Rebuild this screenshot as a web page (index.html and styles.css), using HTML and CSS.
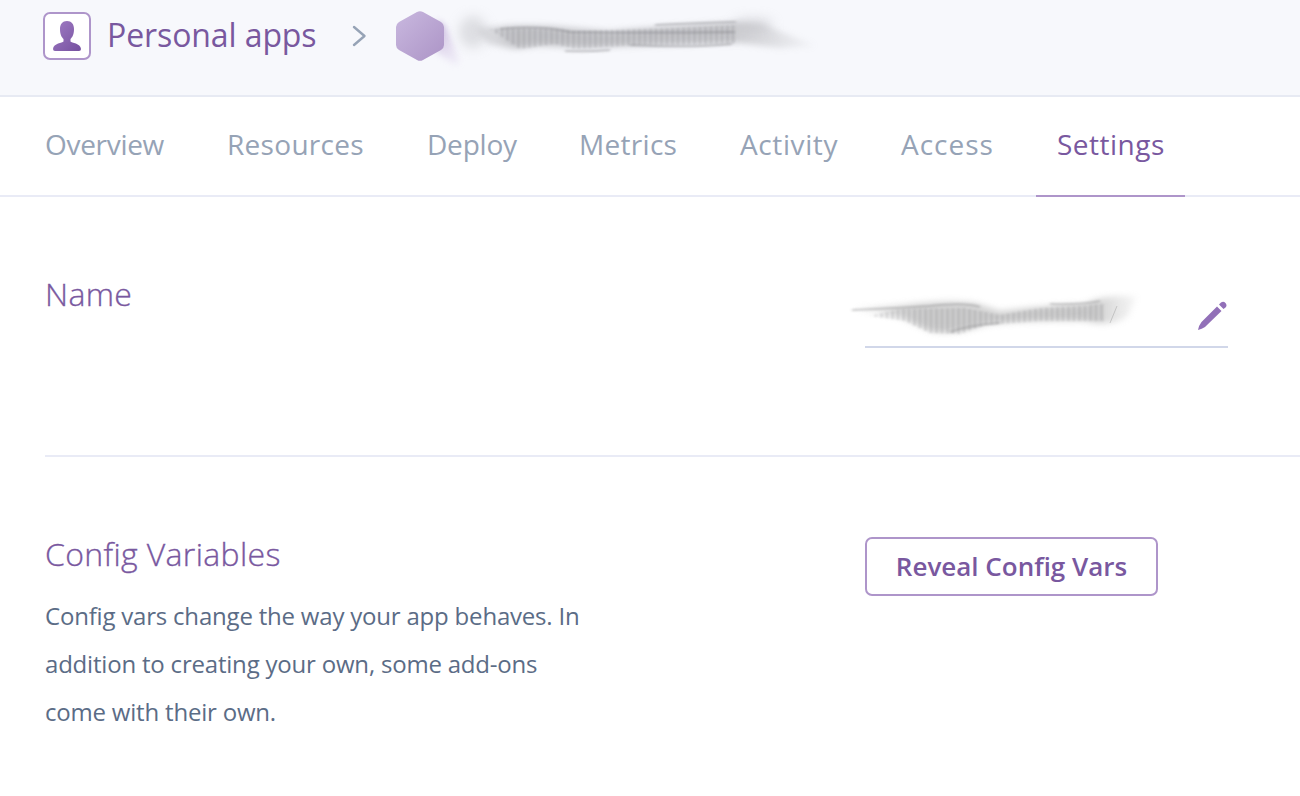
FILE: index.html
```html
<!DOCTYPE html>
<html lang="en">
<head>
<meta charset="utf-8">
<title>Settings</title>
<link rel="stylesheet" href="styles.css">
</head>
<body>
<header class="topbar">
  <span class="avatar"><svg width="28" height="30" viewBox="0 0 28 30"><defs><linearGradient id="ga" x1="0" y1="0" x2="1" y2="1"><stop offset="0" stop-color="#a07cc4"/><stop offset="1" stop-color="#75509f"/></linearGradient></defs><path fill="url(#ga)" d="M14 0C18.500 0 21 3 21 8C21 13.500 19.500 16 17.500 18V20.500C18.500 22 27.500 22 28 28Q28 30 26 30H2Q0 30 0 28C.5 22 9.500 22 10.500 20.500V18C8.500 16 7 13.500 7 8C7 3 9.500 0 14 0Z"/></svg></span>
  <a class="crumb">Personal apps</a>
  <svg class="chevron" width="16" height="24" viewBox="0 0 16 24"><path d="M2 3L12.500 12L2 21" fill="none" stroke="#96a3b6" stroke-width="2.400" stroke-linecap="round" stroke-linejoin="round"/></svg>
  <svg class="app" width="440" height="90" viewBox="390 5 440 90">
    <defs>
      <linearGradient id="gh" x1="0" y1="0" x2="1" y2="1"><stop offset="0" stop-color="#c9b8df"/><stop offset="1" stop-color="#ac94c6"/></linearGradient>
      <linearGradient id="fade" x1="470" x2="822" y1="0" y2="0" gradientUnits="userSpaceOnUse"><stop offset="0" stop-color="#b4b4b8" stop-opacity=".35"/><stop offset=".12" stop-color="#a9a9ad"/><stop offset=".75" stop-color="#b0b0b4"/><stop offset=".85" stop-color="#bbbbbf" stop-opacity=".75"/><stop offset="1" stop-color="#c8c8cc" stop-opacity=".1"/></linearGradient>
      <linearGradient id="tail" x1="440" y1="25" x2="462" y2="66" gradientUnits="userSpaceOnUse"><stop offset="0" stop-color="#b9a2d3"/><stop offset="1" stop-color="#e4daf0" stop-opacity=".3"/></linearGradient>
      <filter id="b3" x="-30%" y="-80%" width="160%" height="260%"><feGaussianBlur stdDeviation="3"/></filter>
      <filter id="b5" x="-60%" y="-80%" width="220%" height="260%"><feGaussianBlur stdDeviation="6"/></filter>
      <filter id="b1" x="-30%" y="-80%" width="160%" height="260%"><feGaussianBlur stdDeviation="1.400 1.100"/></filter>
      <pattern id="st" width="5.500" height="10" patternUnits="userSpaceOnUse"><path d="M1.500 0V10" stroke="#66666a" stroke-width="2.200"/></pattern>
    </defs>
    <path d="M437 20L445 26L460 62L456 66L436 52Z" fill="url(#tail)" opacity=".75" filter="url(#b3)"/>
    <path d="M417 12Q420 10.300 423 12L441 22Q444 24 444 27V45Q444 48 441 50L423 60Q420 61.700 417 60L399 50Q396 48 396 45V27Q396 24 399 22Z" fill="url(#gh)"/>
    <ellipse cx="473" cy="32" rx="14" ry="16" fill="#c4c5c9" opacity=".5" filter="url(#b5)"/>
    <path d="M476 29Q505 24 550 26L610 31Q660 26 738 22L762 24L816 46L780 48L740 43Q650 45 585 48L540 46L515 49L488 44Z" fill="url(#fade)" opacity=".6" filter="url(#b3)"/>
    <path d="M490 29Q540 26 575 31Q650 29 735 25V43Q680 46 640 45L575 49L555 44L520 49Z" fill="url(#st)" opacity=".34" filter="url(#b1)"/>
    <path d="M500 29Q540 25 570 32Q650 33 735 32M655 25Q700 23 736 22M630 45Q690 48 732 44M565 51Q590 52 610 50" fill="none" stroke="#7f7f84" stroke-width="2" opacity=".42" filter="url(#b1)"/>
    <ellipse cx="753" cy="25" rx="20" ry="7" fill="#c0c0c5" opacity=".5" filter="url(#b5)"/>
  </svg>
</header>
<nav class="tabs">
  <a class="tab overview">Overview</a><a class="tab resources">Resources</a><a class="tab deploy">Deploy</a><a class="tab metrics">Metrics</a><a class="tab activity">Activity</a><a class="tab access">Access</a><a class="tab settings">Settings</a>
</nav>
<main>
  <section class="row name-row">
    <h2 class="name-title">Name</h2>
    <div class="field">
      <svg width="380" height="64" viewBox="848 290 380 64">
        <defs><linearGradient id="fade2" x1="848" x2="1142" y1="0" y2="0" gradientUnits="userSpaceOnUse"><stop offset="0" stop-color="#b8b8b8" stop-opacity=".4"/><stop offset=".25" stop-color="#b5b5b5"/><stop offset=".85" stop-color="#b2b2b2"/><stop offset="1" stop-color="#ccc" stop-opacity=".2"/></linearGradient></defs>
        <path d="M855 309L900 305Q950 299 975 303L1000 311Q1050 305 1085 304Q1108 293 1136 297L1128 316Q1112 328 1085 321Q1020 320 985 325Q955 336 930 331L900 317Q870 311 855 309Z" fill="url(#fade2)" opacity=".58" filter="url(#b3)"/>
        <path d="M870 316L900 309L965 308L1000 315L1040 308L1105 304V321L1040 321L985 325L960 334L930 333L905 321Z" fill="url(#st)" opacity=".34" filter="url(#b1)"/>
        <path d="M852 310Q900 308 930 306Q965 302 980 307M950 332Q970 325 1000 323M1050 304Q1080 305 1100 301" fill="none" stroke="#858587" stroke-width="2" opacity=".42" filter="url(#b1)"/>
        <path d="M1110 323L1117 306" fill="none" stroke="#888" opacity=".35"/>
        <path d="M865 347H1228" stroke="#d1d7e9" stroke-width="2"/>
        <path d="M1217 306.500L1221.500 311L1205 327Q1202 329 1198 330Q1199 325 1201.500 322ZM1219 304.500L1221 302.500Q1223.500 301 1225.500 303Q1227.500 305.500 1225.500 307.500L1223.500 309Z" fill="#9270b8"/>
      </svg>
    </div>
  </section>
  <section class="row config-row">
    <div class="info">
      <h2 class="config-title">Config Variables</h2>
      <p>Config vars change the way your app behaves. In<br>addition to creating your own, some add-ons<br>come with their own.</p>
    </div>
    <button class="reveal">Reveal Config Vars</button>
  </section>
</main>
</body>
</html>
```
FILE: styles.css
```css
* { box-sizing: border-box; }
body { margin: 0; background: #fff; font-family: "Open Sans", sans-serif; height: 796px; overflow: hidden; }
.topbar { height: 97px; background: #f7f8fc; border-bottom: 2px solid #e7eaf3; display: flex; align-items: flex-start; padding-left: 43px; }
.avatar { width: 48px; height: 48px; margin-top: 12px; border: 2px solid #ae95ca; border-radius: 7px; background: #fff; display: flex; justify-content: center; align-items: center; }
.crumb { width: 229px; margin: 12px 0 0 16px; color: #79589f; font-size: 32px; line-height: 46px; letter-spacing: -.1px; white-space: nowrap; }
.chevron { margin: 24px 0 0 16px; }
.app { margin: 5px 0 0 22px; flex: none; }
.tabs { height: 100px; border-bottom: 2px solid #e9ebf6; display: flex; padding-left: 24px; gap: 21px; }
.tab { height: 100px; padding-left: 21px; color: #96a3b6; font-size: 28px; line-height: 95px; white-space: nowrap; }
.overview { width: 161px; letter-spacing: -.3px; }
.resources { width: 179px; letter-spacing: .3px; }
.deploy { width: 131px; letter-spacing: -.2px; }
.metrics { width: 140px; letter-spacing: .3px; }
.activity { width: 140px; letter-spacing: .6px; }
.access { width: 135px; letter-spacing: 1px; }
.settings { width: 149px; letter-spacing: .5px; color: #79589f; border-bottom: 2px solid #ae95ca; }
main { padding-left: 45px; }
.row { display: flex; align-items: flex-start; }
.name-row { height: 260px; padding-top: 74px; border-bottom: 2px solid #e9ebf6; }
h2 { margin: 0; color: #79589f; font-weight: 300; font-size: 32px; line-height: 46px; letter-spacing: .35px; -webkit-text-stroke: .35px #79589f; white-space: nowrap; }
.name-title { width: 803px; }
.config-row { padding-top: 74px; }
.field { padding-top: 19px; }
.info { width: 820px; }
p { margin: 15px 0 0; color: #5b6c86; font-size: 24px; line-height: 48px; letter-spacing: -.2px; white-space: nowrap; }
.reveal { width: 293px; height: 59px; margin-top: 6px; padding: 0 0 2px; border: 2px solid #ae95ca; border-radius: 7px; background: #fff; color: #79589f; font: 600 26px "Open Sans", sans-serif; white-space: nowrap; }
```
